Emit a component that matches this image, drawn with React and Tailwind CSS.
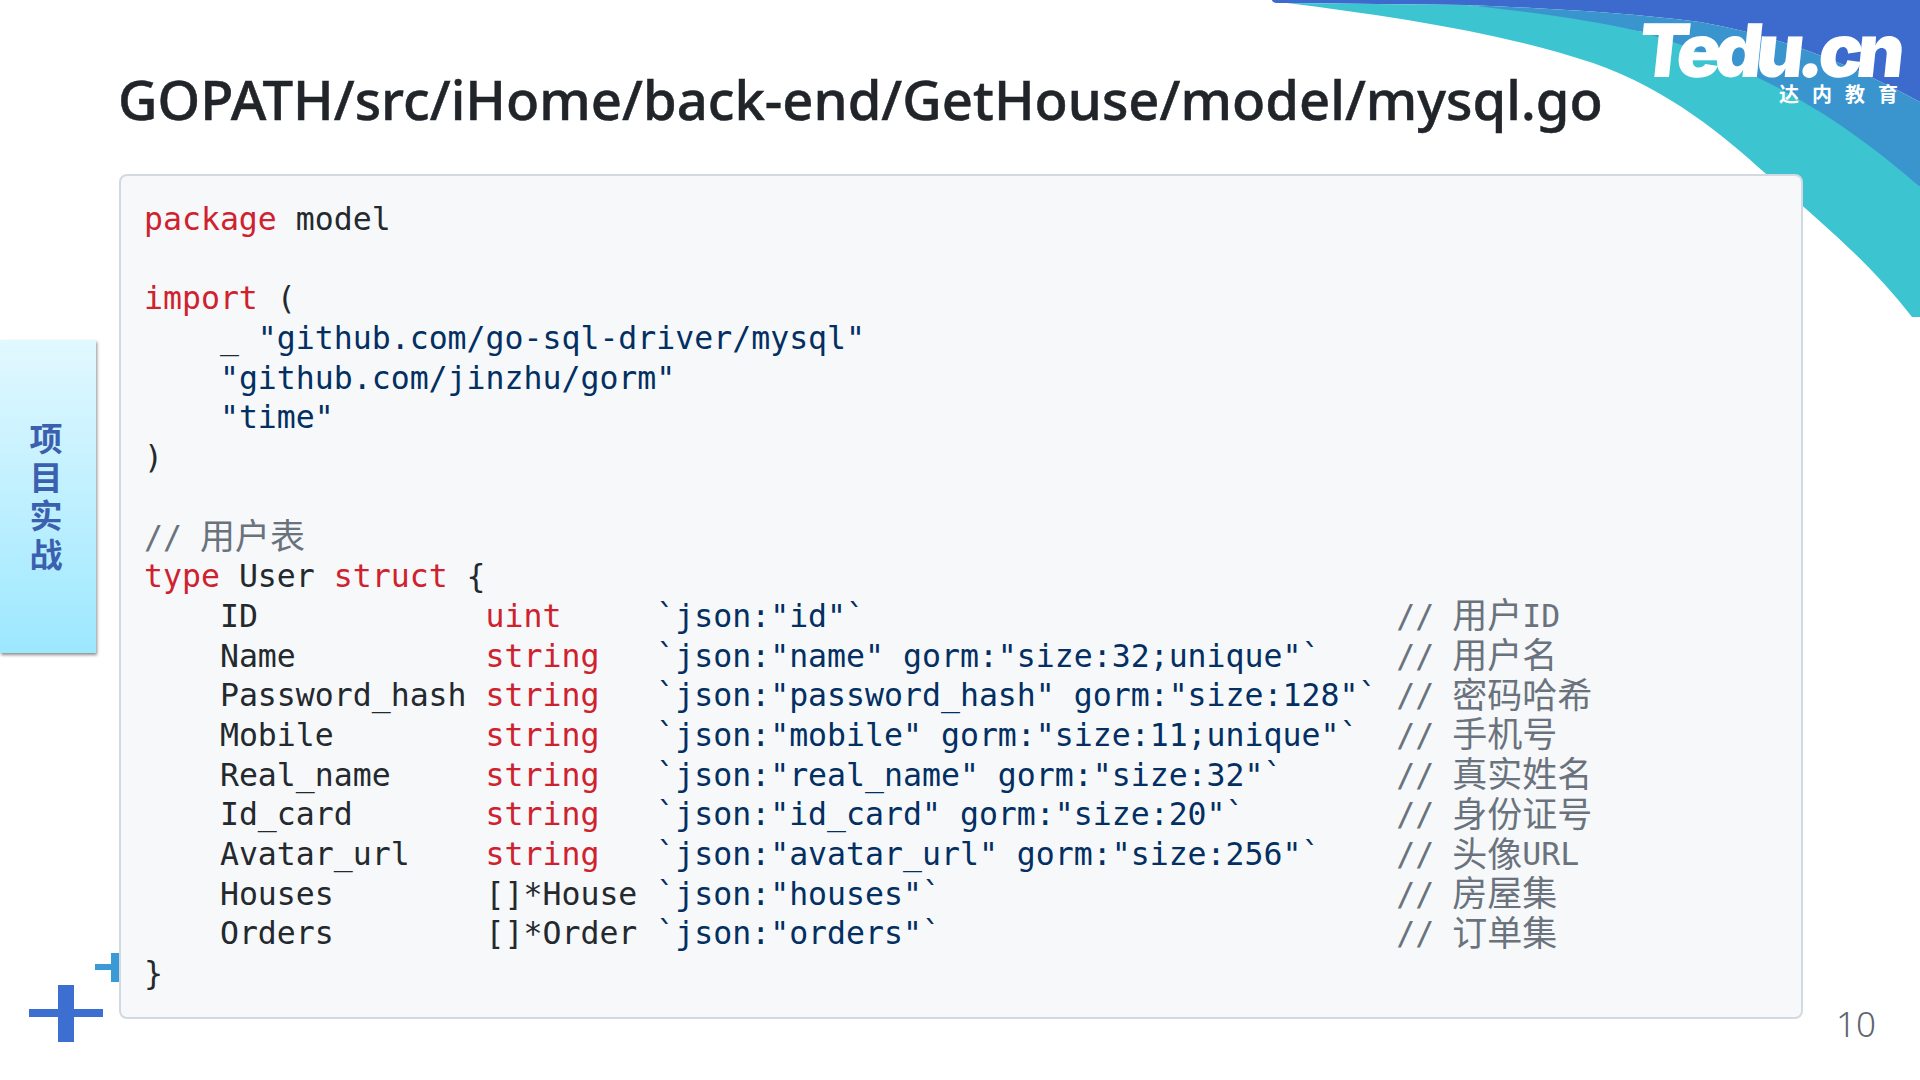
const K = ({ children }) => <span className="text-[#cf222e]">{children}</span>;
const S = ({ children }) => <span className="text-[#032f62]">{children}</span>;
const C = ({ children }) => <span className="text-[#6a737d]">{children}</span>;
const Z = ({ children }) => <span className="-ml-[1px] align-[-1.5px] font-['Noto_Sans_CJK_SC',sans-serif] text-[35px] leading-[0px] font-normal">{children}</span>;

const fields = [
  ["ID            ", "uint    ", '`json:"id"`', "                            ", "用户", "ID"],
  ["Name          ", "string  ", '`json:"name" gorm:"size:32;unique"`', "    ", "用户名", ""],
  ["Password_hash ", "string  ", '`json:"password_hash" gorm:"size:128"`', " ", "密码哈希", ""],
  ["Mobile        ", "string  ", '`json:"mobile" gorm:"size:11;unique"`', "  ", "手机号", ""],
  ["Real_name     ", "string  ", '`json:"real_name" gorm:"size:32"`', "      ", "真实姓名", ""],
  ["Id_card       ", "string  ", '`json:"id_card" gorm:"size:20"`', "        ", "身份证号", ""],
  ["Avatar_url    ", "string  ", '`json:"avatar_url" gorm:"size:256"`', "    ", "头像", "URL"],
  ["Houses        ", "[]*House", '`json:"houses"`', "                        ", "房屋集", ""],
  ["Orders        ", "[]*Order", '`json:"orders"`', "                        ", "订单集", ""],
];

const Line = ({ children }) => <div className="h-[39.7px] leading-[39.7px] whitespace-pre">{children}</div>;

export default function App() {
  return (
    <div className="relative flex w-[1920px] h-[1080px] overflow-hidden bg-white">
      <svg className="absolute left-0 top-0" width="1920" height="1080" viewBox="0 0 1920 1080" fill="none">
        <path d="M1272 0H1920V102C1850 64 1780 36 1700 22C1620 12 1540 8 1467 5L1287 3L1276 3Q1272 2 1272 0Z" fill="#3d6bcd" />
        <path d="M1467 5C1540 8 1620 12 1700 22C1780 36 1850 64 1920 102V187L1643 32Z" fill="#3a95cf" />
        <path d="M1287 3C1390 16 1500 32 1593 63C1670 90 1725 137 1765 173C1815 217 1870 262 1912 317H1920V187C1860 135 1780 75 1643 32C1590 20 1530 12 1467 5Z" fill="#3cc4d0" />
        <path d="M29 1009H58V985H74V1009H103V1017H74V1042H58V1017H29Z" fill="#3d6fd0" />
        <path d="M95 964H111V953H125V982H111V970H95Z" fill="#3b9ad6" />
      </svg>

      <div className="absolute left-[1639px] top-[8px] font-['Inter',sans-serif] text-[74px] leading-[84px] font-black -skew-x-6 tracking-[-6.6px] text-white">Tedu.cn</div>
      <div className="absolute left-[1779px] top-[81px] font-['Noto_Sans_CJK_SC',sans-serif] text-[20px] leading-[26px] font-bold tracking-[13px] text-white whitespace-pre">达内教育</div>

      <aside className="relative w-[119px] shrink-0 pt-[340px]">
        <div className="flex h-[313px] w-[96px] flex-col items-center justify-center bg-gradient-to-b from-[#e1f8ff] to-[#9ce8ff] shadow-[1px_2px_3px_rgba(0,0,0,0.45)] pb-[3px] pr-[4px] font-['Noto_Sans_CJK_SC',sans-serif] text-[33px] font-bold leading-[38.5px] text-[#3a60ae]">
          <span>项</span>
          <span>目</span>
          <span>实</span>
          <span>战</span>
        </div>
      </aside>

      <main className="relative flex-1 flex flex-col">
        <h1 className="-ml-[1px] h-[174px] pt-[63px] font-['Noto_Sans',sans-serif] text-[54.4px] leading-[72px] font-medium [-webkit-text-stroke:0.5px_#212529] text-[#212529] whitespace-pre">GOPATH/src/iHome/back-end/GetHouse/model/mysql.go</h1>
        <div className="h-[845px] w-[1684px] rounded-[8px] border-2 border-[#d3d9e2] bg-[#f6f8fa] pl-[23px] pt-[24px] font-['DejaVu_Sans_Mono','Noto_Sans_CJK_SC',monospace] text-[31.52px] text-[#24292e]">
          <Line><K>package</K> model</Line>
          <Line> </Line>
          <Line><K>import</K> (</Line>
          <Line>    _ <S>"github.com/go-sql-driver/mysql"</S></Line>
          <Line>    <S>"github.com/jinzhu/gorm"</S></Line>
          <Line>    <S>"time"</S></Line>
          <Line>)</Line>
          <Line> </Line>
          <Line><C>// <Z>用户表</Z></C></Line>
          <Line><K>type</K> User <K>struct</K> {"{"}</Line>
          {fields.map(([name, type, tag, pad, zh, en]) => (
            <Line key={name}>
              {"    "}{name}
              {type.startsWith("[") ? type : <K>{type}</K>} <S>{tag}</S>{pad}
              <C>// <Z>{zh}</Z>{en}</C>
            </Line>
          ))}
          <Line>{"}"}</Line>
        </div>
        <div className="-mt-[17px] flex justify-end pr-[44px] font-['Noto_Sans',sans-serif] text-[35px] leading-[44px] font-light text-[#5d6670]">10</div>
      </main>
    </div>
  );
}
